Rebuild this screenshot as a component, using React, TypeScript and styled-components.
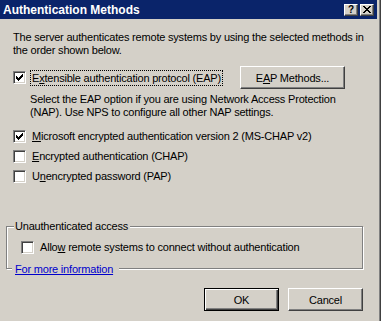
import React from "react";
import styled, { createGlobalStyle } from "styled-components";

const Global = createGlobalStyle`
  html, body { margin: 0; padding: 0; background: #D4D0C8; }
  body { font-family: "Liberation Sans", Arial, sans-serif; font-size: 11px; color: #000; letter-spacing: -0.2px; }
`;

const Frame = styled.div`
  width: 381px;
  height: 321px;
  box-sizing: border-box;
  background: #D4D0C8;
  border-right: 1px solid #404040;
  box-shadow: inset -1px 0 0 #808080;
  padding-right: 3px;
  display: flex;
  flex-direction: column;
  overflow: hidden;
`;

const TitleBar = styled.div`
  height: 19px;
  background: #0A246A;
  display: flex;
  align-items: center;
  padding: 0 3px 0 3px;
  gap: 2px;
`;

const Title = styled.div`
  flex: 1;
  color: #fff;
  font-weight: bold;
  font-size: 12px;
  letter-spacing: 0;
`;

const CapButton = styled.div`
  width: 14px;
  height: 12px;
  box-sizing: border-box;
  background: #D4D0C8;
  border: 1px solid;
  border-color: #fff #404040 #404040 #fff;
  box-shadow: inset -1px -1px 0 #808080;
  display: flex;
  align-items: center;
  justify-content: center;
  font-weight: bold;
  font-size: 10px;
  line-height: 10px;
  letter-spacing: 0;
  font-family: "Liberation Sans", Arial, sans-serif;
`;

const Body = styled.div`
  flex: 1;
  display: flex;
  flex-direction: column;
  padding: 12px 0 0 13px;
`;

const Para = styled.p`
  margin: 0;
  line-height: 13px;
  white-space: nowrap;
`;

const Row = styled.div<{ $mt?: number }>`
  display: flex;
  align-items: center;
  margin-top: ${(p) => p.$mt ?? 0}px;
`;

const Box = styled.span`
  width: 13px;
  height: 13px;
  box-sizing: border-box;
  flex: none;
  background: #fff;
  border: 1px solid;
  border-color: #808080 #fff #fff #808080;
  box-shadow: inset 1px 1px 0 #404040, inset -1px -1px 0 #D4D0C8;
  display: flex;
  align-items: center;
  justify-content: center;
`;

const Label = styled.span<{ $focus?: boolean }>`
  margin-left: 5px;
  padding: 1px 1px;
  outline: ${(p) => (p.$focus ? "1px dotted #000" : "none")};
  white-space: nowrap;
`;

const U = styled.span`
  text-decoration: underline;
`;

const Desc = styled.p`
  margin: 4px 0 0 17px;
  line-height: 13px;
  white-space: nowrap;
`;

const Button = styled.button<{ $default?: boolean }>`
  width: 75px;
  height: 23px;
  box-sizing: border-box;
  font-family: inherit;
  font-size: 11px;
  letter-spacing: -0.2px;
  color: #000;
  background: #D4D0C8;
  padding: 0;
  border: 1px solid;
  border-color: ${(p) => (p.$default ? "#000" : "#fff #404040 #404040 #fff")};
  box-shadow: ${(p) =>
    p.$default
      ? "inset 1px 1px 0 #fff, inset -1px -1px 0 #404040, inset -2px -2px 0 #808080"
      : "inset -1px -1px 0 #808080"};
`;

const EapButton = styled(Button)`
  width: 105px;
  margin-left: auto;
  margin-right: 32px;
`;

const Check = () => (
  <svg width="7" height="7" viewBox="0 0 7 7" shapeRendering="crispEdges">
    <path d="M6 0h1v1h-1zM5 1h2v1h-2zM0 2h1v1h-1zM4 2h3v1h-3zM0 3h2v1h-2zM3 3h3v1h-3zM0 4h5v1h-5zM1 5h3v1h-3zM2 6h1v1h-1z" fill="#000" />
  </svg>
);

const CheckBox = ({ checked }: { checked?: boolean }) => <Box>{checked && <Check />}</Box>;

const Group = styled.div`
  position: relative;
  margin: 43px 14px 0 -7px;
  height: 43px;
  border: 1px solid #808080;
  box-shadow: 1px 1px 0 #fff, inset 1px 1px 0 #fff;
  padding: 13px 0 0 14px;
  box-sizing: border-box;
`;

const Legend = styled.span`
  position: absolute;
  top: -7px;
  left: 7px;
  padding: 0 2px 0 1px;
  background: #D4D0C8;
  line-height: 13px;
`;

const MoreLink = styled.a`
  position: absolute;
  bottom: -8px;
  left: 5px;
  padding: 0 6px 0 3px;
  background: #D4D0C8;
  color: #0000CC;
  text-decoration: underline;
  line-height: 14px;
  cursor: pointer;
`;

const Footer = styled.div`
  display: flex;
  justify-content: flex-end;
  gap: 9px;
  margin: auto 14px 10px 0;
`;

export default function App() {
  return (
    <>
      <Global />
      <Frame>
        <TitleBar>
          <Title>Authentication Methods</Title>
          <CapButton>?</CapButton>
          <CapButton>
            <svg width="8" height="7" viewBox="0 0 8 7" shapeRendering="crispEdges">
              <path d="M0 0h2v1h-2zM6 0h2v1h-2zM1 1h2v1h-2zM5 1h2v1h-2zM2 2h4v1h-4zM3 3h2v1h-2zM2 4h4v1h-4zM1 5h2v1h-2zM5 5h2v1h-2zM0 6h2v1h-2zM6 6h2v1h-2z" fill="#000" />
            </svg>
          </CapButton>
        </TitleBar>
        <Body>
          <Para>
            The server authenticates remote systems by using the selected methods in
            <br />
            the order shown below.
          </Para>
          <Row $mt={9}>
            <CheckBox checked />
            <Label $focus>
              E<U>x</U>tensible authentication protocol (EAP)
            </Label>
            <EapButton>
              E<U>A</U>P Methods...
            </EapButton>
          </Row>
          <Desc>
            Select the EAP option if you are using Network Access Protection
            <br />
            (NAP). Use NPS to configure all other NAP settings.
          </Desc>
          <Row $mt={10}>
            <CheckBox checked />
            <Label>
              <U>M</U>icrosoft encrypted authentication version 2 (MS-CHAP v2)
            </Label>
          </Row>
          <Row $mt={6}>
            <CheckBox />
            <Label>
              <U>E</U>ncrypted authentication (CHAP)
            </Label>
          </Row>
          <Row $mt={6}>
            <CheckBox />
            <Label>
              U<U>n</U>encrypted password (PAP)
            </Label>
          </Row>
          <Group>
            <Legend>Unauthenticated access</Legend>
            <Row>
              <CheckBox />
              <Label>
                Allo<U>w</U> remote systems to connect without authentication
              </Label>
            </Row>
            <MoreLink>For more information</MoreLink>
          </Group>
          <Footer>
            <Button $default>OK</Button>
            <Button>Cancel</Button>
          </Footer>
        </Body>
      </Frame>
    </>
  );
}
